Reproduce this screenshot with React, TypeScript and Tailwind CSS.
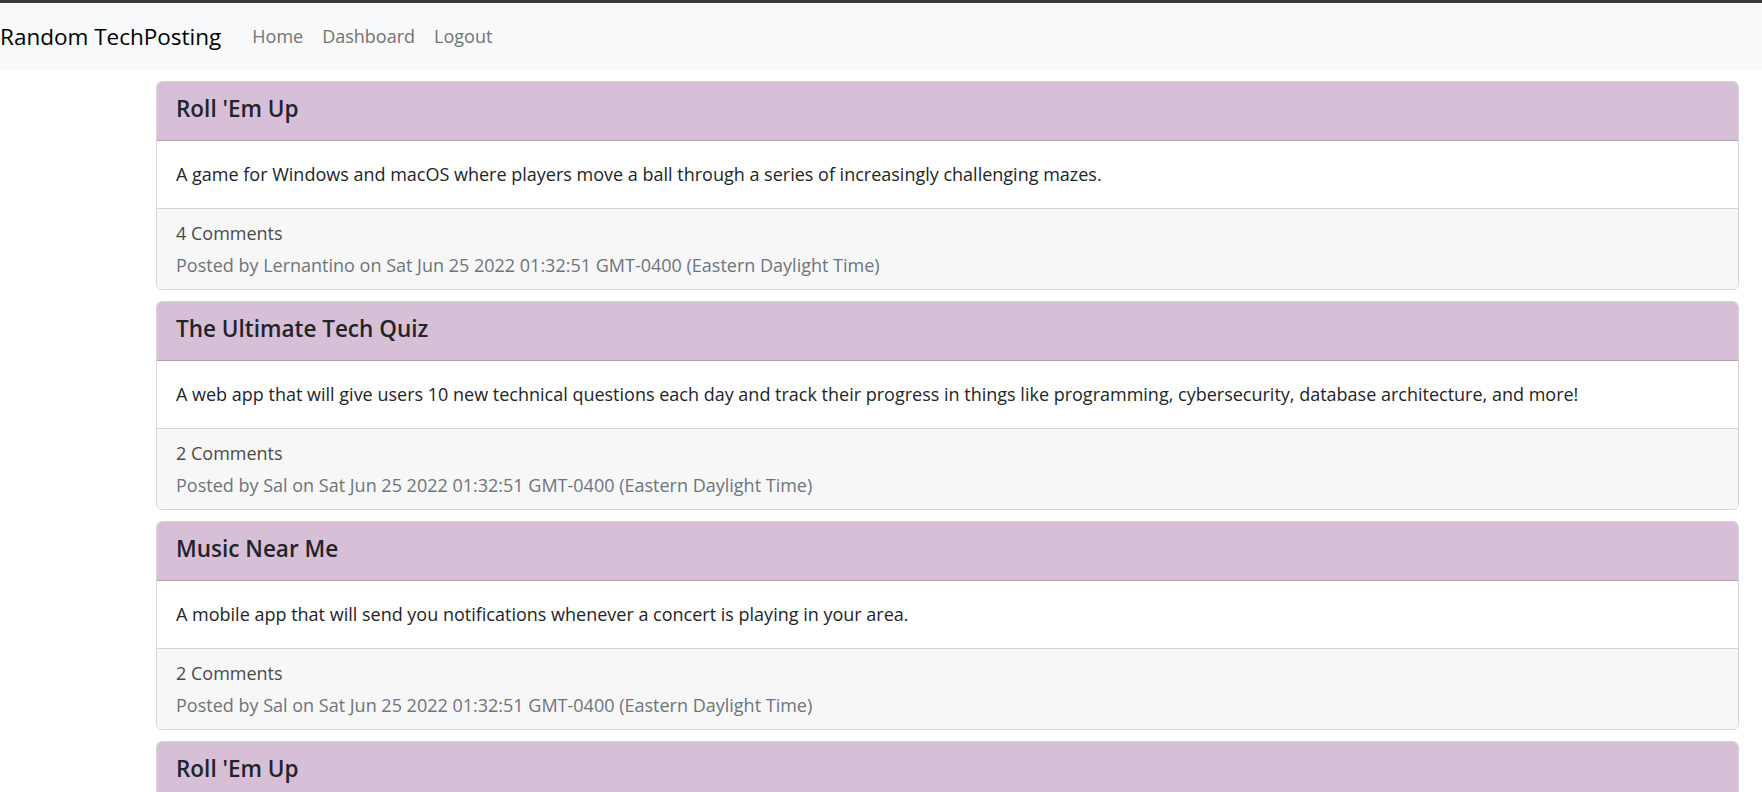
type Post = {
  title: string;
  body: string;
  comments: number;
  author: string;
};

const posted = 'Sat Jun 25 2022 01:32:51 GMT-0400 (Eastern Daylight Time)';

const posts: Post[] = [
  {
    title: "Roll 'Em Up",
    body: 'A game for Windows and macOS where players move a ball through a series of increasingly challenging mazes.',
    comments: 4,
    author: 'Lernantino',
  },
  {
    title: 'The Ultimate Tech Quiz',
    body: 'A web app that will give users 10 new technical questions each day and track their progress in things like programming, cybersecurity, database architecture, and more!',
    comments: 2,
    author: 'Sal',
  },
  {
    title: 'Music Near Me',
    body: 'A mobile app that will send you notifications whenever a concert is playing in your area.',
    comments: 2,
    author: 'Sal',
  },
  {
    title: "Roll 'Em Up",
    body: 'A game for Windows and macOS where players move a ball through a series of increasingly challenging mazes.',
    comments: 4,
    author: 'Lernantino',
  },
];

function PostCard({ post }: { post: Post }) {
  return (
    <article className="overflow-hidden rounded-[6px] border border-[#d6d6d6]">
      <header className="flex h-[59px] items-center border-b border-[#b49fb4] bg-[#d8bfd8] px-[19px] pb-[4px]">
        <h2 className="text-[22.5px] font-semibold text-[#212529]">{post.title}</h2>
      </header>
      <div className="flex h-[67px] items-center bg-white px-[19px] text-[18px] text-[#212529]">
        <p>{post.body}</p>
      </div>
      <footer className="flex h-[81px] flex-col justify-center gap-[7px] border-t border-[#d6d6d6] bg-[#f7f7f7] px-[19px] text-[18px] leading-[25px]">
        <p className="text-[#4a4a4a]">{post.comments} Comments</p>
        <p className="text-[#6c757d]">
          Posted by {post.author} on {posted}
        </p>
      </footer>
    </article>
  );
}

export default function App() {
  return (
    <div className="min-h-screen bg-white font-['Open_Sans',sans-serif]">
      <div className="h-[3px] bg-[#3a3a3a]" />
      <nav className="flex h-[67px] items-center bg-[#f8f9fa]">
        <span className="text-[22.5px] text-black">Random TechPosting</span>
        <ul className="ml-[31px] flex gap-[19px] text-[18px] text-[#737373]">
          <li>Home</li>
          <li>Dashboard</li>
          <li>Logout</li>
        </ul>
      </nav>
      <main className="ml-[156px] mr-[23px] flex flex-col gap-[11px] pt-[11px]">
        {posts.map((p, i) => (
          <PostCard key={i} post={p} />
        ))}
      </main>
    </div>
  );
}
